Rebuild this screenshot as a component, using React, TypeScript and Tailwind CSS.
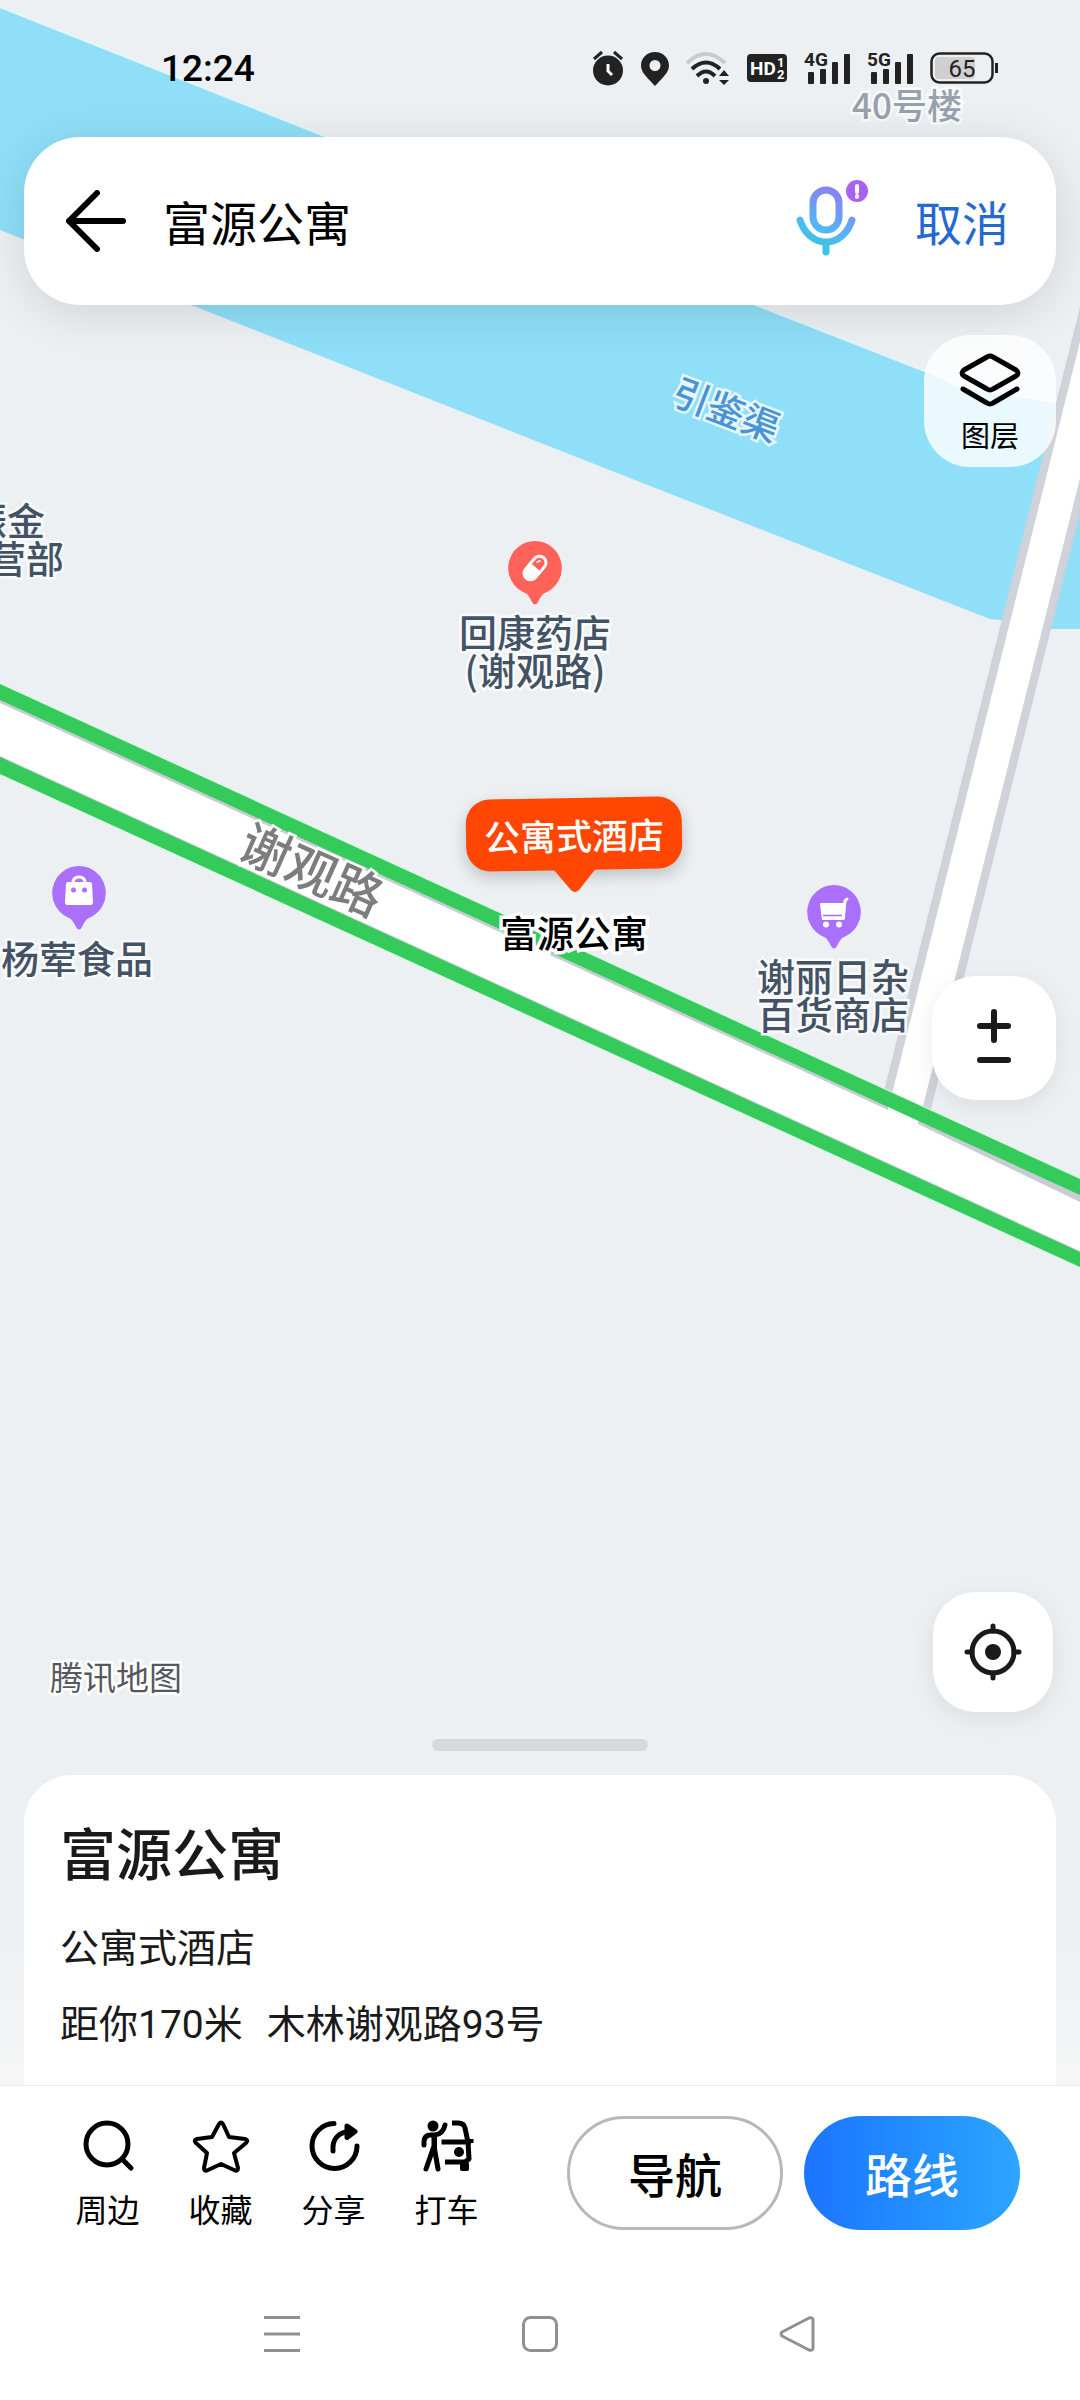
/**
 * Place detail screen of a mobile map app.
 *
 * The map is a free canvas behind the page; search bar, map controls,
 * place card and action bar are laid out in flow on top of it.
 */
import type { ReactNode } from "react"
import { clsx } from "clsx"

interface Action {
  label: string
  icon:  ReactNode
}

const LABEL = "absolute -translate-x-1/2 -translate-y-1/2 whitespace-nowrap text-center font-medium [paint-order:stroke_fill]"
const POI_LABEL = "text-[38px] leading-[38px] text-[#445265] [-webkit-text-stroke:5px_#f8fafb]"

/* ---------- Map ---------- */

function MapShapes() {
  return (
    <svg width="1080" height="1920" viewBox="0 0 1080 1920" aria-hidden="true">
      {/* Canal */}
      <path
        d="M0 8L325 137L754 305L925 372L957 387L1080 408V629H1040L1000 620L990 619L640 482L191 305L0 230Z"
        fill="#8fdff8"
      />
      <path d="M0 7L325 136L754 304L925 371" fill="none" stroke="#e2f5fa" strokeWidth="2" />

      {/* Side road, runs under the main road */}
      <path d="M1115 270L904 1114" stroke="#cfd2d9" strokeWidth="50" fill="none" />
      <path d="M1115 270L904 1114" stroke="#fff" strokeWidth="33" fill="none" />

      {/* Main road */}
      <path d="M0 683L1080 1178V1268L0 775Z" fill="#d9fbe3" />
      <path d="M0 684L1080 1179V1267L0 774Z" fill="#34cb5b" />
      <path d="M0 700L1080 1195V1252L0 757Z" fill="#c9ccd2" />
      <path d="M0 703L888 1110V1107L918 1121V1124L1080 1202V1251L0 756Z" fill="#fff" />
    </svg>
  )
}

function Pin({ className, color, children }: { className: string; color: string; children: ReactNode }) {
  return (
    <svg
      className={clsx("absolute", className)}
      width="56"
      height="66"
      viewBox="0 0 56 66"
      aria-hidden="true"
    >
      <path
        d="M28 1a27 27 0 0 0-10 52c3 1 5 5 7 9q3 5 6 0c2-4 4-8 7-9A27 27 0 0 0 28 1z"
        fill={color}
      />
      {children}
    </svg>
  )
}

function MapCanvas() {
  return (
    <div className="absolute left-1/2 top-0 h-[1920px] w-[1080px] -translate-x-1/2">
      <MapShapes />

      <span className={clsx(LABEL, "left-[907px] top-[104px] text-[35px] leading-[38px] text-[#98a1ad] [-webkit-text-stroke:5px_#f8fafb]")}>
        40号楼
      </span>
      <span className={clsx(LABEL, "left-[727px] top-[408px] rotate-[21deg] text-[37px] leading-[38px] text-[#4a94d6] [-webkit-text-stroke:5px_#e6f7fd]")}>
        引鉴渠
      </span>
      <span className={clsx(LABEL, "left-[313px] top-[867px] rotate-[24deg] text-[50px] leading-[50px] text-[#7d7d7d] [-webkit-text-stroke:5px_#fff]")}>
        谢观路
      </span>

      <span className={clsx(LABEL, POI_LABEL, "left-[7px] top-[538px]")}>
        振金<br />经营部
      </span>

      <Pin className="left-[507px] top-[540px]" color="#ff6258">
        <g transform="rotate(40 28 28)">
          <rect x="20" y="13" width="16" height="30" rx="8" fill="#fff" />
          <path d="M23 27v-6a5 5 0 0 1 10 0v6z" fill="#ff6258" />
          <path d="M26 23v-1q0-2 2-3" stroke="#fff" strokeWidth="1.500" fill="none" />
        </g>
      </Pin>
      <span className={clsx(LABEL, POI_LABEL, "left-[535px] top-[650px]")}>
        回康药店<br />(谢观路)
      </span>

      <Pin className="left-[51px] top-[865px]" color="#aa70fb">
        <path d="M22 18q0-6 6-6t6 6" fill="none" stroke="#fff" strokeWidth="3" />
        <path d="M17 17h22q2 0 2 2l1 18q0 3-2 3H16q-2 0-2-3l1-18q0-2 2-2z" fill="#fff" />
        <circle cx="22.500" cy="25" r="2.500" fill="#aa70fb" />
        <circle cx="33.500" cy="25" r="2.500" fill="#aa70fb" />
      </Pin>
      <span className={clsx(LABEL, POI_LABEL, "left-[77px] top-[957px]")}>杨荤食品</span>

      <Pin className="left-[806px] top-[884px]" color="#aa70fb">
        <path d="M15 19q-1 0-1 1l2 16h21q2 0 2-2l1-15z" fill="#fff" />
        <path d="M41 15l-2 2-2 16" fill="none" stroke="#fff" strokeWidth="3" strokeLinecap="round" />
        <path d="M17 31.500h19" stroke="#aa70fb" strokeWidth="1.500" />
        <circle cx="20" cy="40.500" r="3" fill="#fff" />
        <circle cx="33" cy="40.500" r="3" fill="#fff" />
      </Pin>
      <span className={clsx(LABEL, POI_LABEL, "left-[833px] top-[994px]")}>
        谢丽日杂<br />百货商店
      </span>

      {/* Selected place */}
      <div className="absolute left-[466px] top-[798px] flex h-[72px] w-[216px] -rotate-1 items-center justify-center rounded-[24px] bg-[#ff4602] shadow-[0_6px_16px_rgba(0,0,0,0.2)]">
        <span className="text-[36px] font-medium leading-[38px] text-white">公寓式酒店</span>
        <svg className="absolute left-[86px] top-[70px]" width="44" height="26" viewBox="0 0 44 26" aria-hidden="true">
          <path d="M0 0h44L26 22q-4 4-8 0z" fill="#ff4602" />
        </svg>
      </div>
      <span className={clsx(LABEL, "left-[574px] top-[932px] text-[37px] leading-[38px] text-black [-webkit-text-stroke:7px_#fff]")}>
        富源公寓
      </span>
    </div>
  )
}

/* ---------- Status bar ---------- */

function Signal({ kind }: { kind: string }) {
  return (
    <svg width="46" height="36" viewBox="0 0 46 36" fill="#222" role="img" aria-label={kind}>
      <text x="0" y="16" fontSize="19" fontWeight="700">{kind}</text>
      <rect x="4" y="22" width="6" height="12" rx="1" />
      <rect x="16" y="19" width="6" height="15" rx="1" />
      <rect x="28" y="12" width="6" height="22" rx="1" />
      <rect x="40" y="4" width="6" height="30" rx="1" />
    </svg>
  )
}

function StatusBar() {
  return (
    <div className="relative flex h-[137px] items-start justify-between pl-[161px] pr-[82px] pt-[50px] font-[Roboto,sans-serif]">
      <span className="text-[37px] font-medium leading-[38px] text-black">12:24</span>
      <div className="flex h-9 items-center gap-[17px]">
        <svg width="32" height="36" viewBox="0 0 32 36" aria-hidden="true">
          <circle cx="16" cy="20.500" r="15" fill="#222" />
          <path d="M2 9l8-7M30 9l-8-7" stroke="#222" strokeWidth="3" />
          <path d="M16 14v7l4 4" stroke="#fff" strokeWidth="3" fill="none" />
        </svg>
        <svg width="28" height="36" viewBox="0 0 28 36" aria-hidden="true">
          <path
            d="M14 2C6 2 0 8 0 15.500 0 23 7 28 14 36c7-8 14-13 14-20.500C28 8 22 2 14 2zm0 8a5.500 5.500 0 1 1 0 11 5.500 5.500 0 0 1 0-11z"
            fill="#222"
            fillRule="evenodd"
          />
        </svg>
        <svg width="44" height="36" viewBox="0 0 44 36" fill="none" strokeWidth="4" aria-hidden="true">
          <path d="M1 13Q20-5 39 13" stroke="#c8cacc" />
          <path d="M6 19Q20 6 34 19" stroke="#222" />
          <path d="M11 26Q20 17 29 26" stroke="#222" />
          <circle cx="20" cy="31" r="3" fill="#222" />
          <path d="M38 20l5 6H33zM38 35l5-5H33z" fill="#222" />
        </svg>
        <svg width="40" height="28" viewBox="0 0 40 28" role="img" aria-label="HD 1 2">
          <rect width="40" height="28" rx="4" fill="#222" />
          <text x="3" y="21" fontSize="19" fontWeight="700" fill="#fff">HD</text>
          <text x="30" y="13" fontSize="13" fontWeight="700" fill="#fff">1</text>
          <text x="30" y="25" fontSize="13" fontWeight="700" fill="#fff">2</text>
        </svg>
        <Signal kind="4G" />
        <Signal kind="5G" />
        <svg width="68" height="32" viewBox="0 0 68 32" role="img" aria-label="65%">
          <rect x="5" y="5" width="40" height="22" rx="4" fill="#cfcfcf" />
          <rect x="1.500" y="1.500" width="61" height="29" rx="8" fill="none" stroke="#222" strokeWidth="2.500" />
          <rect x="65" y="11" width="3" height="10" fill="#222" />
          <text x="32" y="25" fontSize="24" textAnchor="middle" fill="#222">65</text>
        </svg>
      </div>
    </div>
  )
}

/* ---------- Search bar ---------- */

function SearchBar() {
  return (
    <form className="relative mx-6 flex h-[168px] items-center rounded-[56px] bg-white pl-[41px] pr-[47px] shadow-[0_8px_48px_rgba(0,0,0,0.12)]">
      <button type="button" aria-label="返回">
        <svg width="62" height="62" viewBox="0 0 62 62" fill="none" stroke="#000" strokeWidth="6" strokeLinecap="round" strokeLinejoin="round">
          <path d="M32 3L4 31l28 28M4 31h54" />
        </svg>
      </button>
      <input
        type="text"
        aria-label="搜索地点"
        defaultValue="富源公寓"
        className="ml-9 min-w-0 flex-1 bg-transparent text-[47px] leading-[60px] text-black outline-none"
      />
      <button type="button" aria-label="语音搜索">
        <svg width="74" height="84" viewBox="0 0 74 84" fill="none">
          <defs>
            <linearGradient id="mic" gradientUnits="userSpaceOnUse" x1="16" y1="72" x2="44" y2="10">
              <stop offset="0" stopColor="#2fcbd8" />
              <stop offset="0.400" stopColor="#56b4f6" />
              <stop offset="1" stopColor="#8f7bf3" />
            </linearGradient>
          </defs>
          <rect x="17" y="11" width="26" height="40" rx="13" stroke="url(#mic)" strokeWidth="7" />
          <path d="M4 41C8 54 18 63 30 63S52 54 56 41M30 63v10" stroke="url(#mic)" strokeWidth="7" strokeLinecap="round" />
          <circle cx="61" cy="12" r="11" fill="#a862f2" />
          <path d="M61 7v6M61 17v1" stroke="#fff" strokeWidth="4" strokeLinecap="round" />
        </svg>
      </button>
      <button type="button" className="ml-[45px] text-[47px] leading-[60px] text-[#2468d2]">取消</button>
    </form>
  )
}

/* ---------- Map controls ---------- */

function MapControls() {
  return (
    <section className="relative flex flex-1 flex-col items-end px-6 pt-[30px]">
      <button
        type="button"
        className="flex size-[132px] flex-col items-center rounded-[46px] bg-white/80 pt-[17px] text-[29px] leading-10 text-black"
      >
        <svg width="62" height="58" viewBox="0 0 62 58" fill="none" stroke="#000" strokeWidth="5" strokeLinecap="round" strokeLinejoin="round">
          <path d="M28 5q3-2 6 0l23 13q4 3 0 6L34 37q-3 2-6 0L5 24q-4-3 0-6z" />
          <path d="M4 37l24 14q3 2 6 0l24-14" />
        </svg>
        <span className="mt-1">图层</span>
      </button>

      <div className="mt-[509px] flex h-[124px] w-[124px] flex-col overflow-hidden rounded-[44px] bg-white shadow-[0_6px_24px_rgba(0,0,0,0.08)]">
        <button type="button" aria-label="放大" className="flex h-[67px] items-end justify-center">
          <svg width="34" height="34" viewBox="0 0 34 34" stroke="#1a1a1a" strokeWidth="6" strokeLinecap="round">
            <path d="M3 17h28M17 3v28" />
          </svg>
        </button>
        <button type="button" aria-label="缩小" className="flex flex-1 items-start justify-center">
          <svg width="34" height="34" viewBox="0 0 34 34" stroke="#1a1a1a" strokeWidth="6" strokeLinecap="round">
            <path d="M3 17h28" />
          </svg>
        </button>
      </div>

      <div className="mt-auto flex w-full items-end justify-between pl-[26px]">
        <span className="mb-3 text-[33px] leading-[48px] text-[#55595e] [-webkit-text-stroke:5px_#fff] [paint-order:stroke_fill]">
          腾讯地图
        </span>
        <button
          type="button"
          aria-label="定位"
          className="mr-[3px] flex size-[120px] items-center justify-center rounded-[42px] bg-white shadow-[0_6px_24px_rgba(0,0,0,0.08)]"
        >
          <svg width="58" height="58" viewBox="0 0 58 58" fill="none" stroke="#1a1a1a" strokeWidth="5" strokeLinecap="round">
            <circle cx="29" cy="29" r="21" />
            <circle cx="29" cy="29" r="8" fill="#1a1a1a" stroke="none" />
            <path d="M29 3v5M29 50v5M3 29h5M50 29h5" />
          </svg>
        </button>
      </div>
    </section>
  )
}

/* ---------- Place card ---------- */

function PlaceCard() {
  return (
    <section className="relative mt-[27px]">
      <div className="absolute inset-x-0 bottom-0 h-[165px] bg-linear-to-b from-[#ecf0f3] to-[#f6f6f6]" />
      <div className="relative mx-auto h-3 w-[216px] rounded-full bg-[#d5dad8]" />
      <div className="relative mx-6 mt-6 rounded-t-[48px] bg-white px-9 pb-[30px] pt-9 text-[#1a1a1a]">
        <h1 className="text-[56px] font-medium leading-[80px]">富源公寓</h1>
        <p className="mt-6 text-[39px] leading-[60px]">公寓式酒店</p>
        <p className="mt-5 flex gap-6 font-[Roboto,'Noto_Sans_CJK_SC',sans-serif] text-[39px] leading-[60px]">
          <span>距你170米</span>
          <span>木林谢观路93号</span>
        </p>
      </div>
    </section>
  )
}

/* ---------- Action bar ---------- */

const ACTIONS: Action[] = [
  {
    label: "周边",
    icon: (
      <>
        <circle cx="25" cy="24" r="21" />
        <path d="M40 39l9 9" />
      </>
    ),
  },
  {
    label: "收藏",
    icon: <path d="M24 4q2-3 4 0l6 13 16 2q4 1 1 4L39 33l4 15q0 4-4 2L26 44l-13 6q-4 2-4-2l3-15L1 23q-3-3 1-4l15-2z" strokeWidth="4" />,
  },
  {
    label: "分享",
    icon: (
      <>
        <path d="M26 3.500A22.500 22.500 0 1 0 49 26" />
        <path d="M25 31c-1-12 5-19 19-20" />
        <path d="M39 6l8 5.500-8 6z" fill="#000" />
      </>
    ),
  },
  {
    label: "打车",
    icon: (
      <>
        <circle cx="12" cy="6" r="5.500" fill="#000" stroke="none" />
        <path d="M3 25v-3q0-7 7-7h4q8-1 10-10M13 16v10L5 49M13 26l4 23" />
        <path d="M11 16h5v14h-5z" fill="#000" stroke="none" />
        <path d="M31 3h6q6 0 7 5l3 14 1 17-4 3M20.500 22H50M50 19v4M24 42h22" strokeLinecap="butt" />
        <circle cx="38" cy="32" r="5" fill="#000" stroke="none" />
        <rect x="39" y="42" width="9" height="9" rx="2" fill="#000" stroke="none" />
      </>
    ),
  },
]

function ActionBar() {
  return (
    <div className="relative flex items-start border-t border-[#ebebeb] bg-white pb-[38px] pl-[51px] pr-[60px] pt-[30px]">
      {ACTIONS.map((action) => (
        <button
          key={action.label}
          type="button"
          className="flex w-[113px] flex-col items-center pt-1 text-[32px] leading-10 text-black"
        >
          <svg width="52" height="52" viewBox="0 0 52 52" className="overflow-visible" fill="none" stroke="#000" strokeWidth="5" strokeLinecap="round" strokeLinejoin="round">
            {action.icon}
          </svg>
          <span className="mt-4">{action.label}</span>
        </button>
      ))}

      <div className="ml-auto flex gap-[21px] text-[47px] font-medium leading-[60px]">
        <button type="button" className="h-[114px] w-[216px] rounded-full border-[3px] border-[#b8b8b8] text-black">
          导航
        </button>
        <button type="button" className="h-[114px] w-[216px] rounded-full bg-linear-to-r from-[#1d74ff] to-[#2ea5ff] text-white">
          路线
        </button>
      </div>
    </div>
  )
}

function SystemNav() {
  return (
    <nav className="relative flex h-[132px] items-center justify-between bg-white px-[263px]">
      <button type="button" aria-label="最近任务">
        <svg width="38" height="38" viewBox="0 0 38 38" stroke="#909090" strokeWidth="3">
          <path d="M1 2.500h36M1 19h36M1 35.500h36" />
        </svg>
      </button>
      <button type="button" aria-label="主屏幕">
        <svg width="38" height="38" viewBox="0 0 38 38" fill="none" stroke="#909090" strokeWidth="3">
          <rect x="2.500" y="2.500" width="33" height="33" rx="7" />
        </svg>
      </button>
      <button type="button" aria-label="后退">
        <svg width="38" height="38" viewBox="0 0 38 38" fill="none" stroke="#909090" strokeWidth="3" strokeLinejoin="round">
          <path d="M3 17L30 3q4-1 4 2v28q0 3-4 2L3 21q-2-2 0-4z" />
        </svg>
      </button>
    </nav>
  )
}

export default function App() {
  return (
    <main className="relative flex min-h-screen flex-col overflow-hidden bg-[#ecf0f3] font-['Noto_Sans_CJK_SC',sans-serif]">
      <MapCanvas />
      <StatusBar />
      <SearchBar />
      <MapControls />
      <PlaceCard />
      <ActionBar />
      <SystemNav />
    </main>
  )
}
